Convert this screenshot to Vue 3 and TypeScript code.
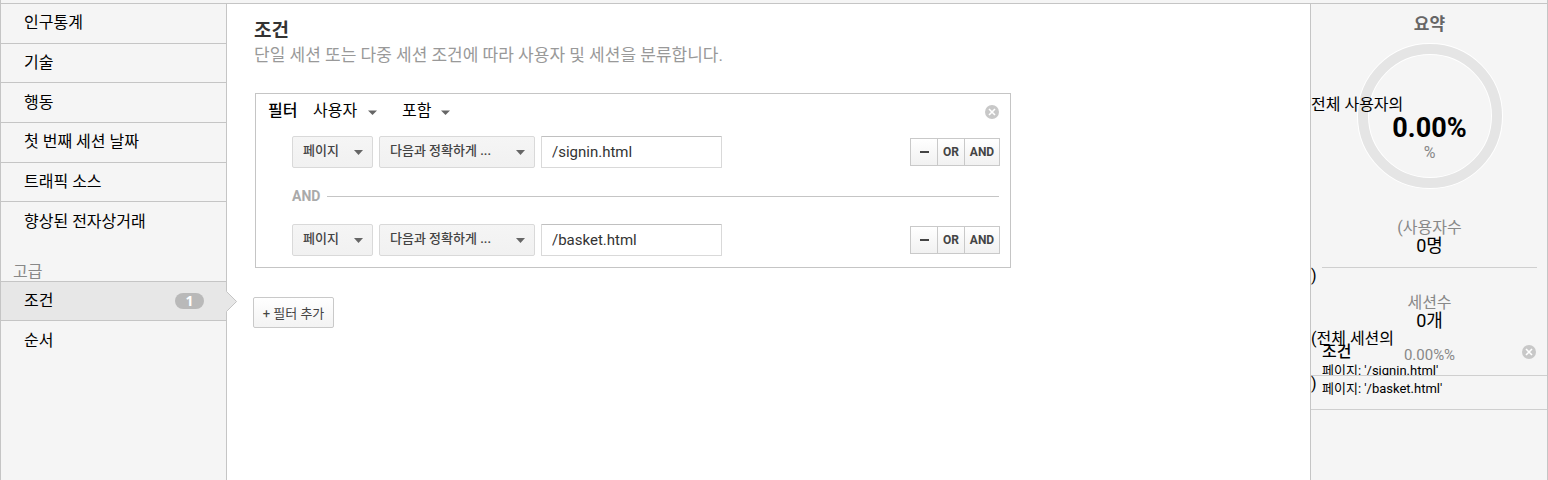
<script setup lang="ts">
import { ref } from 'vue'

interface Condition {
  id: number
  dimension: string
  match: string
  value: string
}

const segments: string[] = ['인구통계', '기술', '행동', '첫 번째 세션 날짜', '트래픽 소스', '향상된 전자상거래']

const scope = ref('사용자')
const mode = ref('포함')
const conditions = ref<Condition[]>([
  { id: 1, dimension: '페이지', match: '다음과 정확하게 ...', value: '/signin.html' },
  { id: 2, dimension: '페이지', match: '다음과 정확하게 ...', value: '/basket.html' },
])
</script>

<template>
  <div class="builder">
    <nav class="sidebar" aria-label="세그먼트">
      <ul class="nav-list">
        <li v-for="name in segments" :key="name"><a href="#">{{ name }}</a></li>
      </ul>
      <h2 class="nav-heading">고급</h2>
      <ul class="nav-advanced">
        <li class="active">
          <a href="#" aria-current="page">조건<span class="badge">1</span></a>
          <svg class="pointer" width="12" height="22" viewBox="0 0 12 22" aria-hidden="true">
            <path d="M0 0 L11 10.5 L0 21 Z" fill="#e7e7e7" />
            <path d="M0.5 0.5 L10.5 10.5 L0.5 20.5" fill="none" stroke="#c5c5c5" />
          </svg>
        </li>
        <li><a href="#">순서</a></li>
      </ul>
    </nav>

    <main class="content">
      <h1>조건</h1>
      <p class="lead">단일 세션 또는 다중 세션 조건에 따라 사용자 및 세션을 분류합니다.</p>

      <section class="panel">
        <header class="panel-head">
          <strong>필터</strong>
          <span class="pick pick-scope">
            <select v-model="scope" aria-label="범위"><option>사용자</option></select>
            <svg class="caret" width="9" height="5" viewBox="0 0 9 5" aria-hidden="true"><path d="M0 0.5H9L4.5 5Z" /></svg>
          </span>
          <span class="pick pick-mode">
            <select v-model="mode" aria-label="포함 여부"><option>포함</option></select>
            <svg class="caret" width="9" height="5" viewBox="0 0 9 5" aria-hidden="true"><path d="M0 0.5H9L4.5 5Z" /></svg>
          </span>
          <button type="button" class="close" aria-label="필터 삭제">
            <svg width="14" height="14" viewBox="0 0 14 14" aria-hidden="true">
              <circle cx="7" cy="7" r="7" fill="#c8c8c8" />
              <path d="M4 4L10 10M10 4L4 10" stroke="#fff" stroke-width="1.6" />
            </svg>
          </button>
        </header>

        <template v-for="(row, i) in conditions" :key="row.id">
          <div v-if="i > 0" class="joiner"><span>AND</span></div>
          <div class="row">
            <span class="drop drop-dimension">
              <select v-model="row.dimension" aria-label="측정기준"><option>페이지</option></select>
              <svg class="caret" width="9" height="5" viewBox="0 0 9 5" aria-hidden="true"><path d="M0 0H9L4.5 5Z" /></svg>
            </span>
            <span class="drop drop-match">
              <select v-model="row.match" aria-label="일치 조건"><option>다음과 정확하게 ...</option></select>
              <svg class="caret" width="9" height="5" viewBox="0 0 9 5" aria-hidden="true"><path d="M0 0H9L4.5 5Z" /></svg>
            </span>
            <input v-model="row.value" type="text" aria-label="값" />
            <div class="ops">
              <button type="button" aria-label="조건 삭제">
                <svg width="9" height="2" viewBox="0 0 9 2" aria-hidden="true"><path d="M0 0H9V2H0Z" fill="#444" /></svg>
              </button>
              <button type="button">OR</button>
              <button type="button" class="wide">AND</button>
            </div>
          </div>
        </template>
      </section>

      <button type="button" class="add">+ 필터 추가</button>
    </main>

    <aside class="summary">
      <section class="stats">
        <h2>요약</h2>
        <div class="gauge">
          <svg class="ring" width="146" height="146" viewBox="0 0 146 146" aria-hidden="true">
            <circle cx="73" cy="73" r="67" fill="none" stroke="#fff" stroke-width="12" />
            <circle cx="73" cy="73" r="67" fill="none" stroke="#e5e5e5" stroke-width="10" />
          </svg>
          <strong>0.00%</strong>
          <span>%</span>
        </div>
        <div class="stat users">
          <span>(사용자수</span>
          <b>0명</b>
        </div>
        <div class="stat">
          <span>세션수</span>
          <b>0개</b>
          <span class="share">0.00%%</span>
        </div>
      </section>
      <section class="applied">
        <div class="applied-head">
          <h3>조건</h3>
          <button type="button" class="close" aria-label="조건 삭제">
            <svg width="14" height="14" viewBox="0 0 14 14" aria-hidden="true">
              <circle cx="7" cy="7" r="7" fill="#c8c8c8" />
              <path d="M4 4L10 10M10 4L4 10" stroke="#fff" stroke-width="1.6" />
            </svg>
          </button>
        </div>
        <p v-for="row in conditions" :key="row.id">{{ row.dimension }}: '{{ row.value }}'</p>
      </section>
      <span class="note note-users">전체 사용자의</span>
      <span class="note note-users-end">)</span>
      <span class="note note-sessions">(전체 세션의</span>
      <span class="note note-sessions-end">)</span>
    </aside>
  </div>
</template>

<style>
body {
  margin: 0;
}
</style>

<style scoped>
* {
  box-sizing: border-box;
}

.builder {
  display: flex;
  min-height: 100vh;
  border: 1px solid #c5c5c5;
  border-top: 0;
  border-bottom: 0;
  background: #fff;
  color: #000;
  font: 15px/20px Roboto, "Noto Sans CJK KR", sans-serif;
  position: relative;
  padding-top: 4px;
}

.builder::before {
  content: "";
  position: absolute;
  inset: 0 0 auto;
  height: 3px;
  background: #f5f5f5;
  border-bottom: 1px solid #c5c5c5;
}

h1, h2, h3, p, ul {
  margin: 0;
  padding: 0;
}

ul {
  list-style: none;
}

a {
  color: inherit;
  text-decoration: none;
}

button, select, input {
  margin: 0;
  font-family: inherit;
}

.sidebar {
  flex: none;
  width: 226px;
  background: #f5f5f5;
  border-right: 1px solid #c5c5c5;
  font-size: 16px;
}

.nav-list {
  display: grid;
  grid-auto-rows: 1fr;
  height: 238px;
}

.nav-list li {
  border-bottom: 1px solid #c5c5c5;
}

.nav-list li:last-child {
  border-bottom: 0;
}

.sidebar a {
  display: flex;
  align-items: center;
  justify-content: space-between;
  height: 100%;
  padding: 0 22px 0 23px;
}

.nav-heading {
  height: 39px;
  padding: 21px 0 0 12px;
  color: #888;
  font-size: 16px;
  font-weight: 400;
  line-height: 18px;
}

.nav-advanced li {
  position: relative;
  height: 39px;
}

.nav-advanced .active {
  height: 40px;
  background: #e7e7e7;
  border: 1px solid #c5c5c5;
  border-width: 1px 0;
}

.badge {
  width: 29px;
  height: 16px;
  border-radius: 8px;
  background: #b9b9b9;
  color: #fff;
  font: bold 14px/16px "Open Sans", sans-serif;
  text-align: center;
}

.pointer {
  position: absolute;
  top: 9px;
  right: -12px;
}

.content {
  flex: 1;
  min-width: 0;
  padding: 16px 28px 0 26px;
}

h1 {
  padding-left: 1px;
  color: #333;
  font-size: 19px;
  font-weight: 700;
  line-height: 22px;
}

.lead {
  padding-left: 1px;
  color: #999;
  font-size: 17px;
  line-height: 26px;
}

.panel {
  max-width: 756px;
  margin: 25px 0 29px 2px;
  padding: 6px 10px 11px 12px;
  border: 1px solid #c5c5c5;
}

.panel-head {
  display: flex;
  align-items: center;
  height: 22px;
  margin-bottom: 14px;
  font-size: 16px;
}

.panel-head strong {
  width: 45px;
  font-weight: 500;
}

.pick, .drop {
  display: flex;
  align-items: center;
  position: relative;
}

select {
  width: 100%;
  appearance: none;
  border: 0;
  background: transparent;
  color: inherit;
}

.pick select {
  padding: 0;
  font-size: 16px;
  line-height: 22px;
}

.pick-scope {
  width: 64px;
  margin-right: 25px;
}

.pick-mode {
  width: 48px;
}

.caret {
  position: absolute;
  top: 50%;
  right: 0;
  margin-top: -2px;
  fill: #666;
  pointer-events: none;
}

.pick .caret {
  margin-top: -1px;
}

.close {
  display: flex;
  padding: 0;
  border: 0;
  background: none;
}

.panel-head .close {
  margin: 2px 1px 0 auto;
}

.row {
  display: flex;
  align-items: center;
  gap: 6px;
  height: 32px;
  margin-left: 24px;
}

.drop {
  height: 32px;
  border: 1px solid #d9d9d9;
  border-radius: 2px;
  background: linear-gradient(#f5f5f5, #f1f1f1);
  color: #444;
}

.drop select {
  height: 30px;
  padding: 0 10px 3px;
  font-size: 13px;
  font-weight: 500;
}

.drop .caret {
  right: 9px;
}

.drop-dimension {
  width: 81px;
}

.drop-match {
  width: 156px;
}

.row input {
  width: 181px;
  height: 32px;
  padding: 0 10px;
  border: 1px solid #d9d9d9;
  border-top-color: #c0c0c0;
  border-radius: 1px;
  background: #fff;
  color: #333;
  font-size: 15px;
}

.ops {
  display: flex;
  margin-left: auto;
}

.ops button {
  display: flex;
  align-items: center;
  justify-content: center;
  width: 28px;
  height: 28px;
  padding: 0;
  border: 1px solid #c9c9c9;
  background: linear-gradient(#fff, #f1f1f1);
  color: #444;
  font-size: 12px;
  font-weight: 700;
}

.ops button + button {
  margin-left: -1px;
}

.ops .wide {
  width: 36px;
}

.joiner {
  display: flex;
  align-items: center;
  gap: 7px;
  height: 56px;
  margin: 0 1px 0 24px;
  color: #aaa;
  font-size: 14px;
  font-weight: 700;
}

.joiner::after {
  content: "";
  flex: 1;
  height: 1px;
  background: #c5c5c5;
}

.add {
  display: block;
  width: 81px;
  height: 31px;
  padding: 0;
  border: 1px solid #c9c9c9;
  border-radius: 2px;
  background: linear-gradient(#fff, #f3f3f3);
  color: #444;
  font-size: 13px;
}

.summary {
  position: relative;
  flex: none;
  width: 237px;
  background: #f5f5f5;
  border-left: 1px solid #c5c5c5;
}

.stats {
  height: 372px;
  padding: 9px 10px 0 11px;
  border-bottom: 1px solid #cfcfcf;
  text-align: center;
}

.stats h2 {
  color: #666;
  font-size: 17px;
  font-weight: 700;
  line-height: 22px;
}

.gauge {
  display: flex;
  flex-direction: column;
  align-items: center;
  position: relative;
  height: 146px;
  margin: 8px 0 30px;
  padding-top: 71px;
}

.ring {
  position: absolute;
  top: 0;
}

.gauge strong {
  position: relative;
  font-size: 27px;
  line-height: 29px;
}

.gauge span {
  color: #888;
  font-size: 16px;
}

.stat {
  display: flex;
  flex-direction: column;
}

.stat span {
  color: #888;
  font-size: 16px;
  line-height: 18px;
}

.stat b {
  font-size: 18px;
  font-weight: 400;
  line-height: 18px;
}

.users {
  height: 49px;
  margin-bottom: 26px;
  border-bottom: 1px solid #cfcfcf;
}

.stat .share {
  padding-top: 16px;
  font-size: 15px;
}

.applied {
  position: relative;
  height: 68px;
  margin-top: -34px;
  padding: 1px 11px 0;
  border-bottom: 1px solid #cfcfcf;
}

.applied-head {
  display: flex;
  align-items: center;
  justify-content: space-between;
  height: 18px;
}

h3 {
  font-size: 16px;
  font-weight: 500;
  line-height: 18px;
}

.applied p {
  height: 14px;
  overflow: hidden;
  font-size: 13px;
  line-height: 19px;
}

.applied p + p {
  height: 19px;
  margin-top: 4px;
}

.note {
  position: absolute;
  left: 0;
  font-size: 16px;
}

.note-users {
  top: 91px;
}

.note-users-end {
  top: 262px;
}

.note-sessions {
  top: 325px;
}

.note-sessions-end {
  top: 370px;
}
</style>
